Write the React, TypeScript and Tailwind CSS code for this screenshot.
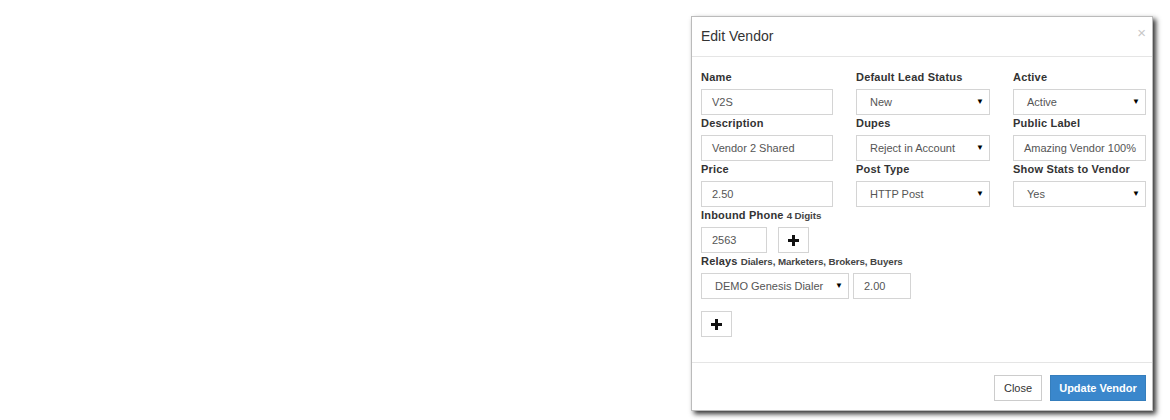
import React from 'react';

const font = { fontFamily: '"Liberation Sans", Arial, sans-serif' };

const Label = ({ children, hint }: { children: React.ReactNode; hint?: string }) => (
  <div className="h-4 mb-1 text-[11px] leading-4 font-bold text-[#333] tracking-[0.2px] whitespace-nowrap">
    {children}
    {hint && <span className="ml-[3px] text-[9.8px] font-bold text-[#444] tracking-[-0.1px]">{hint}</span>}
  </div>
);

const TextBox = ({ value, className = '' }: { value: string; className?: string }) => (
  <div className={`h-[26px] border border-[#d4d4d4] bg-white pl-[10px] text-[11px] leading-[24px] text-[#555] overflow-hidden whitespace-nowrap ${className}`}>
    {value}
  </div>
);

const SelectBox = ({ value, className = '' }: { value: string; className?: string }) => (
  <div className={`h-[26px] border border-[#d4d4d4] bg-white pl-[13px] pr-[5px] flex items-center justify-between text-[11px] text-[#555] whitespace-nowrap ${className}`}>
    <span>{value}</span>
    <span className="text-[8px] text-black">▼</span>
  </div>
);

const PlusButton = () => (
  <div className="w-[31px] h-[26px] border border-[#d4d4d4] bg-white flex items-center justify-center">
    <svg width="11" height="11" viewBox="0 0 11 11">
      <path d="M4 0h3v4h4v3H7v4H4V7H0V4h4z" fill="#111" />
    </svg>
  </div>
);

// field grid: label + control per cell
const fields = [
  { label: 'Name', value: 'V2S', select: false },
  { label: 'Default Lead Status', value: 'New', select: true },
  { label: 'Active', value: 'Active', select: true },
  { label: 'Description', value: 'Vendor 2 Shared', select: false },
  { label: 'Dupes', value: 'Reject in Account', select: true },
  { label: 'Public Label', value: 'Amazing Vendor 100%', select: false },
  { label: 'Price', value: '2.50', select: false },
  { label: 'Post Type', value: 'HTTP Post', select: true },
  { label: 'Show Stats to Vendor', value: 'Yes', select: true },
];

export default function App() {
  return (
    <div className="w-[1170px] h-[420px] bg-white relative" style={font}>
      <div className="flex justify-end pt-4 pr-[17px]">
        <div className="w-[462px] bg-white border border-[#bbb] shadow-[3px_3px_5px_rgba(0,0,0,0.8)]">
          {/* header */}
          <div className="h-[40px] border-b border-[#e5e5e5] flex items-center justify-between pl-[9px] pr-[6px]">
            <h4 className="text-[14px] text-[#333] -mt-[1px]">Edit Vendor</h4>
            <span className="text-[15px] text-[#c8c8c8] leading-none -mt-[8px]">×</span>
          </div>

          {/* body */}
          <div className="pl-[9px] pr-[6px] pt-[12px] pb-[25px]">
            <div className="grid grid-cols-[132px_134px_133px] gap-x-[23px]">
              {fields.map((f, i) => (
                <div key={i}>
                  <Label>{f.label}</Label>
                  {f.select ? <SelectBox value={f.value} /> : <TextBox value={f.value} />}
                </div>
              ))}
            </div>

            <div>
              <Label hint="4 Digits">Inbound Phone</Label>
              <div className="flex gap-[11px] mt-[1px]">
                <TextBox value="2563" className="w-[66px]" />
                <PlusButton />
              </div>
            </div>

            <div>
              <Label hint="Dialers, Marketers, Brokers, Buyers">Relays</Label>
              <div className="flex gap-[4px] mt-[1px]">
                <SelectBox value="DEMO Genesis Dialer" className="w-[148px]" />
                <TextBox value="2.00" className="w-[58px] pl-[9px]" />
              </div>
            </div>

            <div className="mt-[12px]">
              <PlusButton />
            </div>
          </div>

          {/* footer */}
          <div className="border-t border-[#e5e5e5] flex justify-end gap-2 pt-[12px] pb-[9px] pr-[6px]">
            <div className="h-[26px] w-[48px] justify-center border border-[#ccc] bg-white text-[11px] text-[#333] flex items-center">Close</div>
            <div className="h-[26px] w-[96px] justify-center bg-[#3a87cc] border border-[#357ebd] text-[11px] font-bold text-white flex items-center">Update Vendor</div>
          </div>
        </div>
      </div>
    </div>
  );
}
